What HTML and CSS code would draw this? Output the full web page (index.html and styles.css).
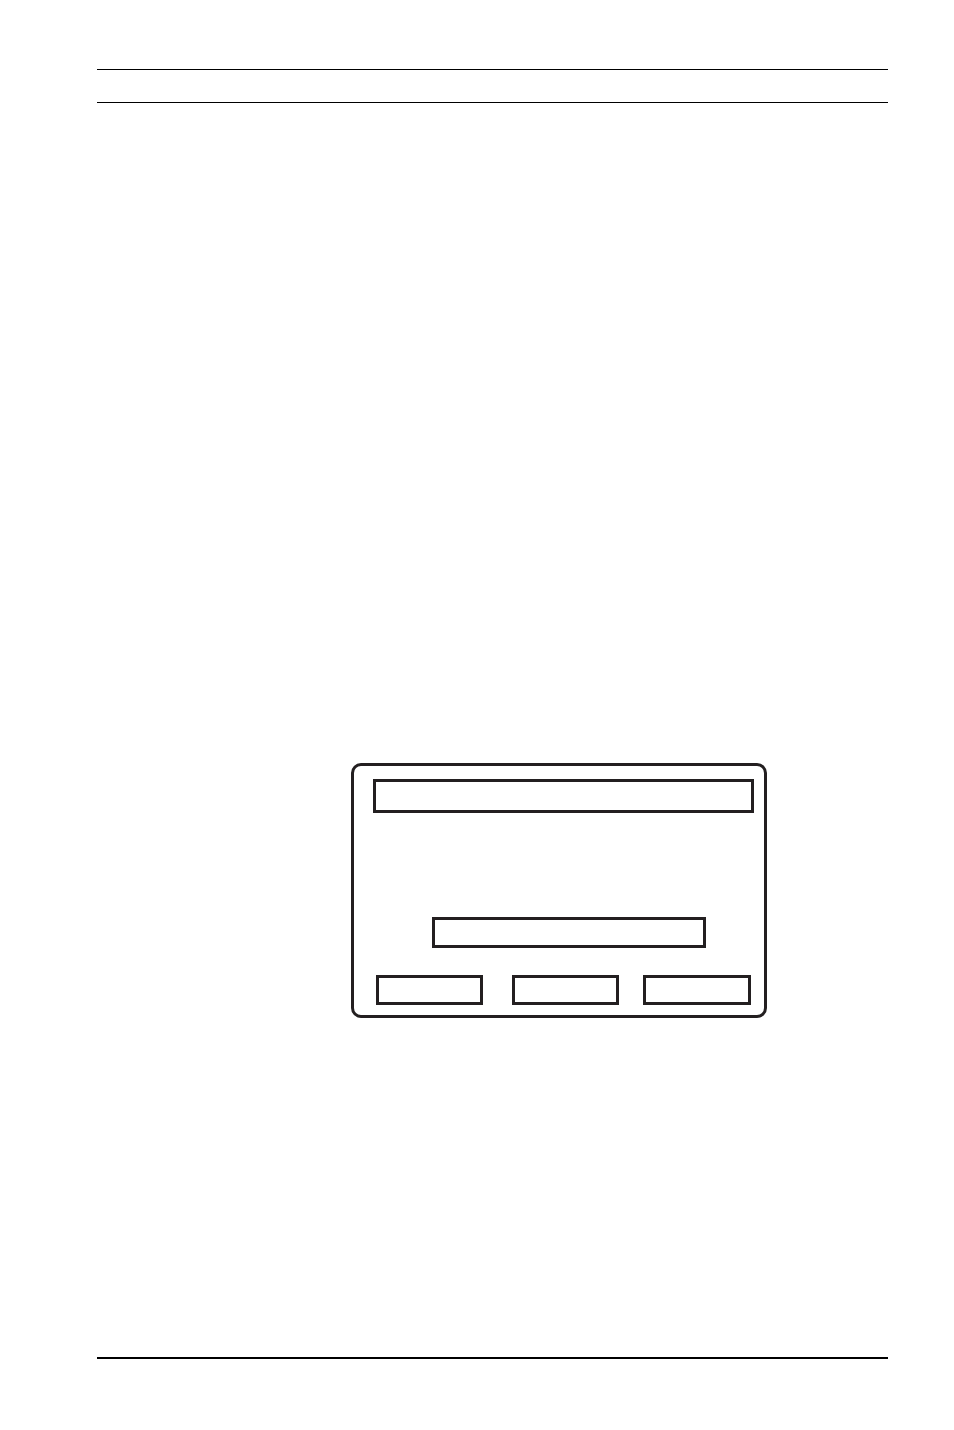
FILE: index.html
```html
<!DOCTYPE html>
<html lang="en">
<head>
    <meta charset="UTF-8">
    <meta name="viewport" content="width=device-width, initial-scale=1.0">
    <title>Dialog Figure</title>
    <link rel="stylesheet" href="styles.css">
</head>
<body>
    <div class="page">
        <div class="header">
            <div class="rule"></div>
            <div class="rule rule-second"></div>
        </div>

        <div class="figure">
            <div class="dialog">
                <div class="title-bar"></div>
                <div class="field"></div>
                <div class="buttons">
                    <div class="btn"></div>
                    <div class="btn"></div>
                    <div class="btn btn-last"></div>
                </div>
            </div>
        </div>

        <div class="footer"></div>
    </div>
</body>
</html>
```

FILE: styles.css
```css
body {
    margin: 0;
    background: #fff;
    font-family: "Liberation Sans", Arial, sans-serif;
}
.page {
    width: 791px;
    margin-left: 97px;
    padding-top: 69px;
}
.rule {
    height: 1px;
    background: #000;
}
.rule-second {
    margin-top: 32px;
}
.figure {
    margin-top: 660px;
    padding-left: 254px;
}
.dialog {
    box-sizing: border-box;
    width: 416px;
    height: 255px;
    border: 3px solid #231f20;
    border-radius: 10px;
    padding: 13px 10px 10px 19px;
    display: flex;
    flex-direction: column;
}
.title-bar {
    box-sizing: border-box;
    width: 381px;
    height: 34px;
    border: 3px solid #231f20;
}
.field {
    box-sizing: border-box;
    width: 274px;
    height: 31px;
    margin-top: 104px;
    margin-left: 59px;
    border: 3px solid #231f20;
}
.buttons {
    display: flex;
    gap: 29px;
    margin-top: 27px;
    margin-left: 3px;
}
.btn {
    box-sizing: border-box;
    width: 107px;
    height: 30px;
    border: 3px solid #231f20;
}
.btn-last {
    width: 108px;
    margin-left: -5px;
}
.footer {
    margin-top: 339px;
    height: 2px;
    background: #000;
}
```
